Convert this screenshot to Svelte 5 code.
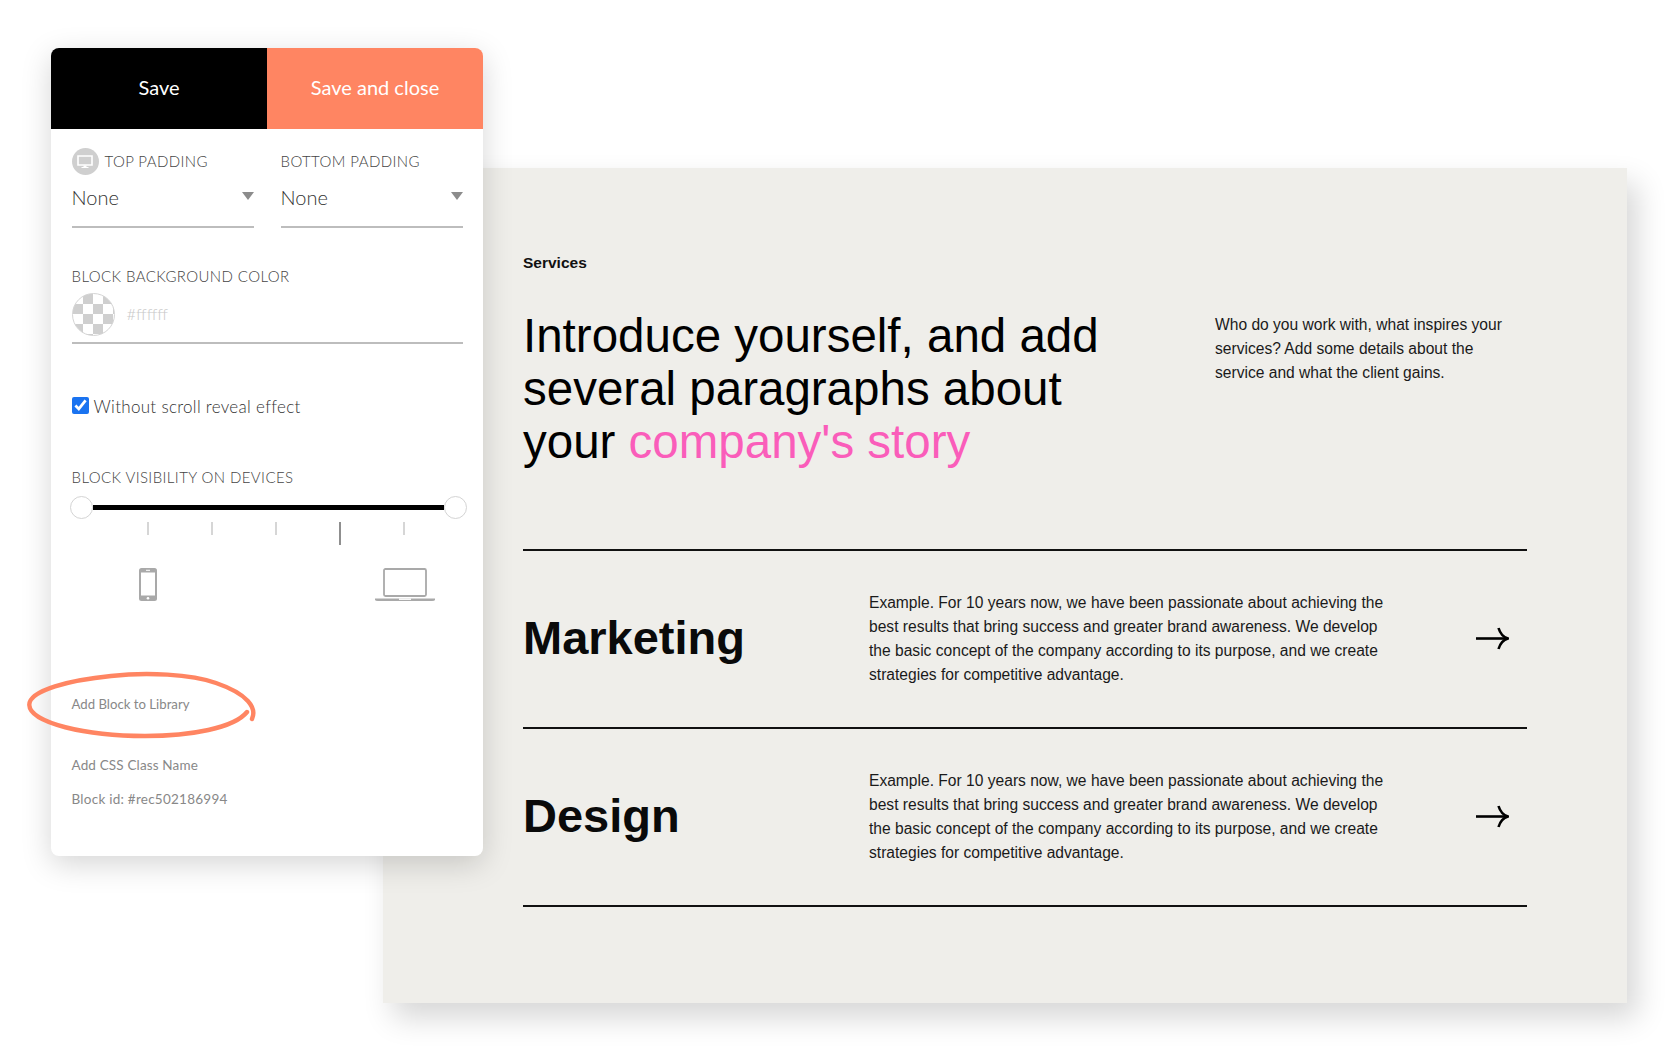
<script>
  const services = [
    { name: "Marketing" },
    { name: "Design" }
  ];
  const copy = "Example. For 10 years now, we have been passionate about achieving the best results that bring success and greater brand awareness. We develop the basic concept of the company according to its purpose, and we create strategies for competitive advantage.";
  const ticks = [false, false, false, true, false];
</script>

<div class="stage">
  <section class="page">
    <div class="eyebrow">Services</div>
    <div class="intro">
      <h1>Introduce yourself, and add several paragraphs about your <span class="pink">company's story</span></h1>
      <p class="aside">Who do you work with, what inspires your services? Add some details about the service and what the client gains.</p>
    </div>
    <div class="rows">
      {#each services as s}
        <div class="row">
          <h2>{s.name}</h2>
          <p>{copy}</p>
          <svg class="arrow" viewBox="0 0 33 23" width="33" height="23" aria-hidden="true">
            <path d="M0 11.5H32" fill="none" stroke="#000" stroke-width="2.6" />
            <path d="M22.5 1C24 6 26.5 10 32 11.5C26.5 13 24 17 22.5 22" fill="none" stroke="#000" stroke-width="2.6" />
          </svg>
        </div>
      {/each}
    </div>
  </section>

  <aside class="panel">
    <div class="actions">
      <button class="save">Save</button>
      <button class="close">Save and close</button>
    </div>
    <div class="body">
      <div class="paddings">
        <div class="field">
          <div class="label with-icon">
            <span class="device">
              <svg viewBox="0 0 16 14" width="16" height="14" aria-hidden="true">
                <path d="M1 1h14v9H1z" fill="none" stroke="#fff" stroke-width="1.6" />
                <path d="M6.5 10.5h3v1.5h2v1h-7v-1h2z" fill="#fff" />
              </svg>
            </span>
            TOP PADDING
          </div>
          <div class="select">None<i class="caret"></i></div>
        </div>
        <div class="field">
          <div class="label">BOTTOM PADDING</div>
          <div class="select">None<i class="caret"></i></div>
        </div>
      </div>

      <div class="label bg-label">BLOCK BACKGROUND COLOR</div>
      <div class="color">
        <span class="swatch"></span>
        <span class="hex">#ffffff</span>
      </div>

      <label class="check">
        <input type="checkbox" checked />
        <span>Without scroll reveal effect</span>
      </label>

      <div class="label vis-label">BLOCK VISIBILITY ON DEVICES</div>
      <div class="slider">
        <span class="knob"></span>
        <span class="track"></span>
        <span class="knob"></span>
      </div>
      <div class="ticks">
        {#each ticks as long}
          <span class="tick" class:long></span>
        {/each}
      </div>
      <div class="devices">
        <svg class="phone" viewBox="0 0 18 33" width="18" height="33" aria-hidden="true">
          <rect width="18" height="33" rx="2.5" fill="#a9a9a9" />
          <rect x="2" y="4.5" width="14" height="23" fill="#fff" />
          <circle cx="9" cy="30.2" r="1.3" fill="#fff" />
          <rect x="7" y="1.8" width="4" height="1" fill="#fff" />
        </svg>
        <svg class="laptop" viewBox="0 0 60 33" width="60" height="33" aria-hidden="true">
          <rect x="9" y="1" width="42" height="27" rx="1.5" fill="none" stroke="#a9a9a9" stroke-width="1.8" />
          <path d="M0 30.5h60v1.2q0 1.3-3 1.3H3q-3 0-3-1.3z" fill="#a9a9a9" />
          <rect x="24" y="30.5" width="12" height="1.4" fill="#fff" />
        </svg>
      </div>

      <div class="link library">Add Block to Library</div>
      <div class="link css">Add CSS Class Name</div>
      <div class="link blockid">Block id: #rec502186994</div>
    </div>
    <svg class="scribble" viewBox="0 0 240 76" width="240" height="76" aria-hidden="true">
      <path d="M226 51C231 40 222 26 190 15C165 6 120 4 85 8C45 12 3 22 3.3 37C4 55 60 68 119 68C165 68 208 60 221 44" fill="none" stroke="#ff8562" stroke-width="4.4" stroke-linecap="round" />
    </svg>
  </aside>
</div>

<style>
:global(body) {
  background: #fff;
}
.stage {
  position: relative;
  width: 1680px;
  height: 1052px;
  padding: 168px 0 0 383px;
  box-sizing: border-box;
  overflow: hidden;
  font-family: "Liberation Sans", Arial, sans-serif;
}

.page {
  width: 1244px;
  height: 835px;
  padding: 86px 100px 0 140px;
  box-sizing: border-box;
  background: #efeeea;
  box-shadow: 10px 15px 28px rgba(0, 0, 0, .16);
  color: #000;
}
.eyebrow {
  font-size: 15.5px;
  font-weight: 700;
  line-height: 18px;
  color: #111;
}
.intro {
  display: flex;
  justify-content: space-between;
  margin-top: 37px;
  height: 240px;
}
h1 {
  margin: 0;
  width: 600px;
  font-size: 47.5px;
  font-weight: 400;
  line-height: 53px;
  color: #000;
}
.pink { color: #fa5dba; }
.aside {
  margin: 4px 0 0;
  width: 312px;
  font-size: 15.6px;
  line-height: 24px;
  color: #1a1a1a;
}
.rows { border-top: 2px solid #111; }
.row {
  display: flex;
  align-items: center;
  height: 176px;
  border-bottom: 2px solid #111;
  position: relative;
}
h2 {
  margin: 0 0 2px;
  width: 346px;
  flex-shrink: 0;
  font-size: 47px;
  font-weight: 700;
  line-height: 56px;
  color: #0a0a0a;
}
.row p {
  margin: 0;
  width: 530px;
  font-size: 15.6px;
  line-height: 24px;
  color: #1a1a1a;
}
.arrow { margin: 0 0 2px 77px; flex-shrink: 0; }

.panel {
  position: absolute;
  left: 51px;
  top: 48px;
  width: 432px;
  height: 808px;
  background: #fff;
  border-radius: 8px;
  box-shadow: 0 8px 30px rgba(0, 0, 0, .17);
  font-family: Lato, "Open Sans", sans-serif;
  font-weight: 300;
  color: #4b4b4b;
}
.actions {
  display: flex;
  height: 81px;
}
.actions button {
  flex: 1;
  border: 0;
  padding: 0 0 4px;
  font: inherit;
  font-size: 20px;
  font-weight: 400;
  color: #fff;
}
.save { background: #000; border-radius: 8px 0 0 0; }
.close { background: #ff8562; border-radius: 0 8px 0 0; }

.body { padding: 19px 20px 0 20.5px; }
.paddings {
  display: grid;
  grid-template-columns: 182px 182px;
  gap: 27px;
}
.label {
  font-size: 15px;
  line-height: 27px;
  letter-spacing: .4px;
  color: #444;
}
.with-icon {
  display: flex;
  align-items: center;
  gap: 6px;
}
.device {
  width: 27px;
  height: 27px;
  border-radius: 50%;
  background: #cfcfcf;
  display: flex;
  align-items: center;
  justify-content: center;
}
.select {
  position: relative;
  height: 53px;
  padding-top: 8px;
  box-sizing: border-box;
  font-size: 20px;
  line-height: 28px;
  color: #333;
  border-bottom: 2px solid #bdbdbd;
}
.caret {
  position: absolute;
  right: 0;
  top: 17px;
  border-left: 6.5px solid transparent;
  border-right: 6.5px solid transparent;
  border-top: 8px solid #8c8c8c;
}
.bg-label { margin-top: 35px; }
.color {
  display: flex;
  align-items: center;
  gap: 12px;
  height: 52px;
  margin-top: 2px;
  border-bottom: 2px solid #bdbdbd;
  box-sizing: border-box;
  padding-bottom: 6px;
}
.swatch {
  width: 43px;
  height: 43px;
  box-sizing: border-box;
  border-radius: 50%;
  border: 1px solid #d4d4d4;
  background: repeating-conic-gradient(#cfcfcf 0 25%, #fff 0 50%) 0 0 / 20px 20px;
}
.hex {
  font-size: 16.5px;
  color: #c8c8c8;
}
.check {
  display: flex;
  align-items: center;
  gap: 5px;
  margin-top: 49px;
  font-size: 17px;
  line-height: 24px;
  letter-spacing: .3px;
  color: #333;
}
.check span { position: relative; top: 2px; }
.check input {
  width: 17px;
  height: 17px;
  margin: 0;
  accent-color: #1a73f0;
}
.vis-label { margin-top: 47px; }
.slider {
  display: flex;
  align-items: center;
  margin: 4px -4px 0 -2px;
  height: 24px;
}
.knob {
  width: 23px;
  height: 23px;
  box-sizing: border-box;
  flex-shrink: 0;
  border-radius: 50%;
  border: 1.5px solid #d4d4d4;
  background: #fff;
}
.track {
  flex: 1;
  height: 5px;
  background: #000;
}
.ticks {
  display: flex;
  gap: 62px;
  align-items: flex-start;
  margin: 3px 0 0 75px;
}
.tick {
  width: 2px;
  height: 13px;
  background: #d6d6d6;
}
.tick.long {
  height: 23px;
  background: #8f8f8f;
}
.devices {
  display: flex;
  justify-content: space-between;
  margin: 23px 28px 0 67px;
}
.link {
  font-size: 13.5px;
  line-height: 18px;
  font-weight: 400;
  color: #888;
}
.library { margin-top: 94px; font-size: 13.2px; }
.css { margin-top: 43px; letter-spacing: .15px; }
.blockid { margin-top: 16px; letter-spacing: .25px; }
.scribble {
  position: absolute;
  left: -25px;
  top: 620px;
}
</style>
